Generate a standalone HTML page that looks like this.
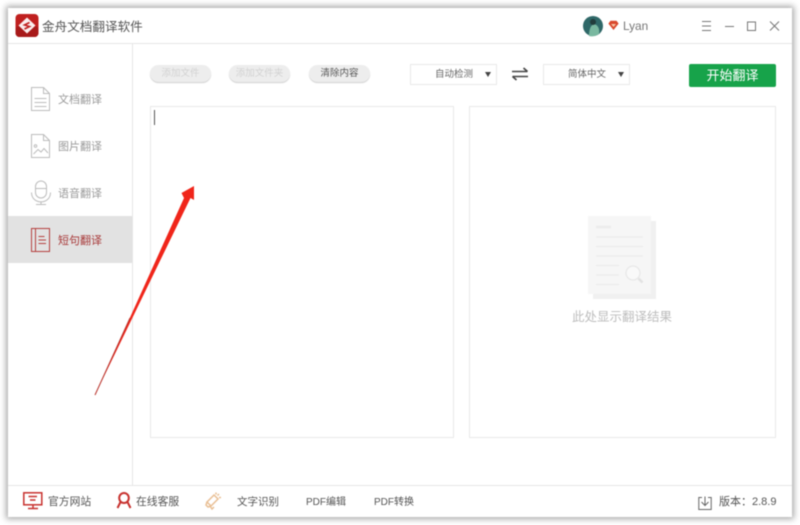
<!DOCTYPE html>
<html lang="zh">
<head>
<meta charset="utf-8">
<style>
html,body{margin:0;padding:0;background:#fff}
body{width:800px;height:525px;overflow:hidden;position:relative;font-family:"Liberation Sans","Noto Sans CJK SC",sans-serif}
#w{position:absolute;left:0;top:0;width:800px;height:525px;filter:blur(.4px)}
.win{position:absolute;left:8px;top:8px;width:784px;height:509px;background:#fff;box-shadow:0 0 6px 2px rgba(0,0,0,.34)}
.a{position:absolute;white-space:nowrap}
.line{position:absolute;background:#e6e6e6}
.nav{font-size:11px;color:#9a9a9a;line-height:14px}
.pill{position:absolute;top:65px;height:17px;border-radius:9px;background:#ededed;box-shadow:0 1px 1px #cfcfcf;font-size:9.5px;line-height:17px;text-align:center;color:#d2d2d2}
.sel{position:absolute;top:64px;height:21px;box-sizing:border-box;border:1px solid #e9e9e9;background:#fff;font-size:9.5px;line-height:19px;color:#666}
.tri{position:absolute;width:0;height:0;border-left:3.5px solid transparent;border-right:3.5px solid transparent;border-top:5px solid #444;top:7px}
.panel{position:absolute;top:106px;height:332px;box-sizing:border-box;border:1px solid #e9e9e9;background:#fff}
.foot{font-size:10.5px;color:#555;line-height:14px}
svg{position:absolute;overflow:visible}
</style>
</head>
<body>
<div id="w">
<div class="win"></div>

<!-- separators -->
<div class="line" style="left:8px;top:43px;width:784px;height:1px"></div>
<div class="line" style="left:132px;top:44px;width:1px;height:441px"></div>
<div class="line" style="left:8px;top:485px;width:784px;height:1px"></div>

<!-- logo -->
<svg style="left:15px;top:14px" width="24" height="24" viewBox="0 0 24 24">
<rect x="0.5" y="0" width="23" height="23" rx="4" fill="#c0201f"/>
<rect x="0.5" y="12" width="23" height="11" rx="4" fill="#a81a1a"/>
<path d="M12 3.500L20.500 11.500 12 19.500 3.500 11.500Z" fill="#fbeeee"/>
<path d="M14.500 8.500L9.500 11 14.500 12.500 9.500 15" fill="none" stroke="#c0201f" stroke-width="1.600"/>
</svg>
<div class="a" style="left:42px;top:18px;font-size:12.6px;line-height:18px;color:#555">金舟文档翻译软件</div>

<!-- user -->
<svg style="left:583px;top:16px" width="20" height="20" viewBox="0 0 20 20">
<circle cx="10" cy="10" r="10" fill="#2f6868"/>
<path d="M6 20C6 13 8 9 11 8 15 9 17 13 16 18 13 20 9 21 6 20Z" fill="#79b8a0"/>
<circle cx="10" cy="6" r="3" fill="#223c3c"/>
</svg>
<svg style="left:608px;top:20px" width="11" height="11" viewBox="0 0 11 11">
<path d="M2.500 .8H8.500L10.600 3.600 5.500 10 .4 3.600Z" fill="#d9482c"/>
<path d="M3 4H8L5.500 7Z" fill="#f6c9a8"/>
</svg>
<div class="a" style="left:623px;top:19px;font-size:11.800px;line-height:15px;color:#777">Lyan</div>

<!-- window controls -->
<svg style="left:700px;top:19px" width="80" height="14" viewBox="0 0 80 14" fill="none" stroke="#777" stroke-width="1">
<path d="M2 2.500H11M2 7H11M2 11.500H11"/>
<path d="M25 7.500H34"/>
<rect x="47.500" y="3" width="8" height="8.500"/>
<path d="M70 2.500L79 11.500M79 2.500L70 11.500"/>
</svg>

<!-- sidebar -->
<div class="a" style="left:8px;top:216px;width:124px;height:47px;background:#e2e2e2"></div>

<svg style="left:31px;top:87px" width="20" height="24" viewBox="0 0 20 24" fill="none" stroke="#bcbcbc" stroke-width="1">
<path d="M.5 .5H12.500L18.500 6.500V23.500H.5Z"/><path d="M12.500 .5V6.500H18.500"/>
<path d="M3.500 11.500H15.500M3.500 15.500H15.500M3.500 19.500H15.500"/>
</svg>
<div class="a nav" style="left:58px;top:93px">文档翻译</div>

<svg style="left:31px;top:134px" width="20" height="24" viewBox="0 0 20 24" fill="none" stroke="#bcbcbc" stroke-width="1">
<path d="M.5 .5H12.500L18.500 6.500V23.500H.5Z"/><path d="M12.500 .5V6.500H18.500"/>
<circle cx="4.500" cy="12" r="1.300"/><path d="M2.500 20L7 15.500 10 18 13 14.500 17 19"/>
</svg>
<div class="a nav" style="left:58px;top:140px">图片翻译</div>

<svg style="left:30px;top:180px" width="22" height="26" viewBox="0 0 22 26" fill="none" stroke="#bcbcbc" stroke-width="1">
<rect x="5.500" y="1" width="11" height="17" rx="5.500"/><path d="M5.500 8.500H16.500"/>
<path d="M1.500 12.500C1.500 25 20.500 25 20.500 12.500"/><path d="M11 21.500V24.500M6 24.500H16"/>
</svg>
<div class="a nav" style="left:58px;top:187px">语音翻译</div>

<svg style="left:31px;top:228px" width="20" height="24" viewBox="0 0 20 24" fill="none" stroke="#b5413f" stroke-width="1">
<rect x=".5" y=".5" width="18" height="23"/><path d="M4.500 .5V23.500"/>
<path d="M7.500 8.500H13.500M7.500 12H15M7.500 15.500H15"/>
</svg>
<div class="a nav" style="left:58px;top:234px;color:#a83a3a">短句翻译</div>

<!-- toolbar -->
<div class="pill" style="left:150px;width:61px">添加文件</div>
<div class="pill" style="left:229px;width:61px">添加文件夹</div>
<div class="pill" style="left:309px;width:61px;color:#555">清除内容</div>

<div class="sel" style="left:410px;width:87px;padding-left:24px">自动检测<span class="tri" style="left:74px"></span></div>
<svg style="left:511px;top:66px" width="18" height="16" viewBox="0 0 18 16" fill="none" stroke="#444" stroke-width="1.600">
<path d="M1 5.500H16.500M12.500 2L16.500 5.500"/><path d="M17 10.500H1.500M5.500 14L1.500 10.500"/>
</svg>
<div class="sel" style="left:543px;width:87px;padding-left:24px">简体中文<span class="tri" style="left:74px"></span></div>

<div class="a" style="left:689px;top:64px;width:87px;height:23px;border-radius:2px;background:#17a34a;color:#fff;font-size:13px;line-height:23px;text-align:center">开始翻译</div>

<!-- panels -->
<div class="panel" style="left:150px;width:303.500px"></div>
<div class="a" style="left:154px;top:110px;width:1px;height:15px;background:#555"></div>
<div class="panel" style="left:469px;width:307px"></div>

<!-- empty state -->
<svg style="left:588px;top:216px" width="68" height="84" viewBox="0 0 68 84">
<rect x="5" y="5" width="63" height="78" fill="#f0f0f0"/>
<rect x="0" y="0" width="63" height="78" fill="#f6f6f6"/>
<g stroke="#ececec" stroke-width="1.300" fill="none">
<path d="M8 11H23" stroke-width="2.500"/>
<path d="M8 21H55M8 30.500H55M8 40H55M8 49.500H31M8 59H31M8 68.500H31"/>
<circle cx="45" cy="57" r="7" stroke="#e8e8e8" fill="#f9f9f9"/>
<path d="M50.500 62.500L54.500 66.500" stroke="#e2e2e2" stroke-width="2.500"/>
</g>
</svg>
<div class="a" style="left:572px;top:309px;font-size:12.500px;line-height:16px;color:#bdbdbd">此处显示翻译结果</div>

<!-- red arrow -->
<svg style="left:0;top:0" width="800" height="525" viewBox="0 0 800 525">
<path d="M95 395L184 198 181.500 193 194 186 194 200 190.500 198Z" fill="#f0251a"/>
<path d="M95 395L130 318" stroke="#b8322a" stroke-width="1" fill="none"/>
</svg>

<!-- footer -->
<svg style="left:23px;top:492px" width="20" height="18" viewBox="0 0 20 18" fill="none" stroke="#c8322f" stroke-width="1.500">
<rect x=".8" y=".8" width="18" height="12"/><path d="M5.500 4.500H14M7 8H12.500M10 13V16.500M5 16.500H15"/>
</svg>
<div class="a foot" style="left:48px;top:495px;font-size:10.800px">官方网站</div>
<svg style="left:116px;top:492px" width="16" height="18" viewBox="0 0 16 18" fill="none" stroke="#c8322f" stroke-width="2">
<ellipse cx="8" cy="6" rx="4.800" ry="5"/><path d="M4.500 10L1.500 16M11.500 10L14.500 16"/>
</svg>
<div class="a foot" style="left:136px;top:495px;font-size:10.800px">在线客服</div>
<svg style="left:205px;top:491px" width="17" height="19" viewBox="0 0 17 19" fill="none" stroke="#e9bf94" stroke-width="1.500">
<path d="M2 11L9 4 13 8 6 15Z"/><path d="M2 11L1 14 3 16 6 15M5 15L7 18 9 16M11 1.500V3.500M14 3L12.500 4.500M16 6.500H14"/>
</svg>
<div class="a foot" style="left:237px;top:495px">文字识别</div>
<div class="a foot" style="left:306px;top:496px;font-size:10px">PDF编辑</div>
<div class="a foot" style="left:374px;top:496px;font-size:10px">PDF转换</div>

<svg style="left:698px;top:496px" width="14" height="14" viewBox="0 0 14 14" fill="none" stroke="#666" stroke-width="1">
<path d="M4 1.500H.8V13.500H13.200V1.500H10M7 .5V9.500M3.500 6L7 9.500 10.500 6"/>
</svg>
<div class="a foot" style="left:719px;top:495px;font-size:11px;color:#555">版本：2.8.9</div>
</div>
</body>
</html>
